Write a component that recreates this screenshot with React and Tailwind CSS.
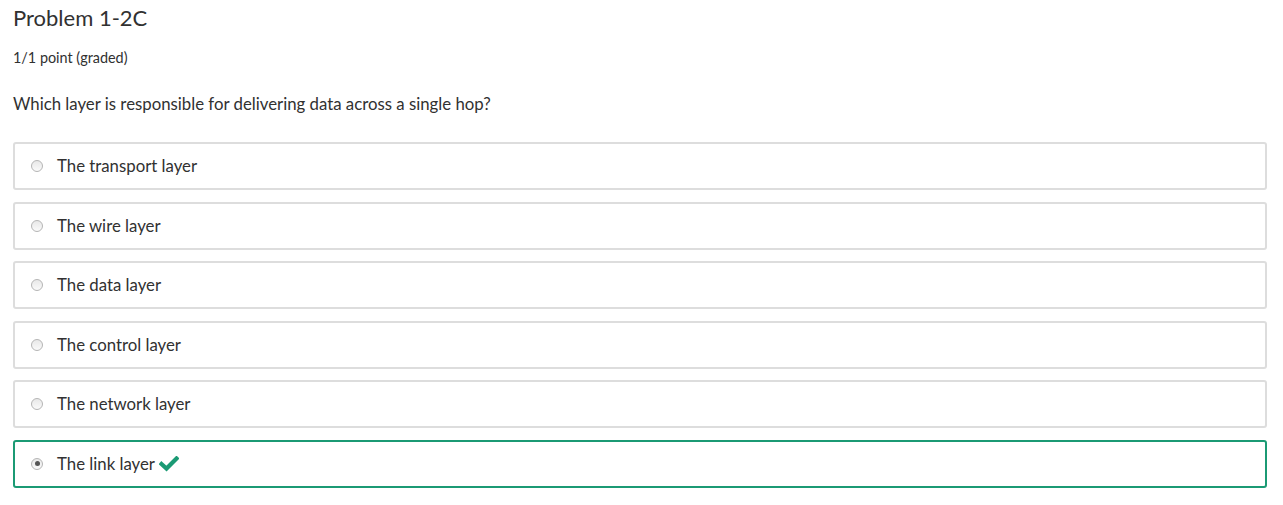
import React from "react";

const options = [
  "The transport layer",
  "The wire layer",
  "The data layer",
  "The control layer",
  "The network layer",
  "The link layer",
];

function Check() {
  return (
    <svg width="20" height="16" viewBox="0 0 20 16" className="ml-[4px]">
      <path d="M2.5 8 L7.5 12.5 L17.5 2.5" fill="none" stroke="#1b9a74" strokeWidth="4.2" strokeLinecap="square" />
    </svg>
  );
}

export default function App() {
  return (
    <div className="bg-white text-[#313131] px-[13px] pt-[3px] pb-[16px]" style={{ fontFamily: "Lato, 'Open Sans', sans-serif" }}>
      <h1 className="text-[22px] leading-[30px] font-normal m-0">Problem 1-2C</h1>
      <div className="text-[14.4px] leading-[18px] mt-[16px]">1/1 point (graded)</div>
      <div className="text-[16.8px] leading-[22px] mt-[26px]">Which layer is responsible for delivering data across a single hop?</div>
      <div className="mt-[27px] flex flex-col gap-[11.5px] w-[1254px]">
        {options.map((o, i) => {
          const sel = i === options.length - 1;
          return (
            <div
              key={o}
              className={`h-[48px] rounded-[3px] border-2 flex items-center pl-[16px] ${sel ? "border-[#1b9a74]" : "border-[#dddddd]"}`}
            >
              <span className="w-[12px] h-[12px] rounded-full border border-[#b5b5b5] bg-gradient-to-b from-[#e8e8e8] to-[#fafafa] flex items-center justify-center">
                {sel && <span className="w-[5px] h-[5px] rounded-full bg-[#555]" />}
              </span>
              <span className="ml-[14px] text-[16.8px] leading-[22px]">{o}</span>
              {sel && <Check />}
            </div>
          );
        })}
      </div>
    </div>
  );
}
